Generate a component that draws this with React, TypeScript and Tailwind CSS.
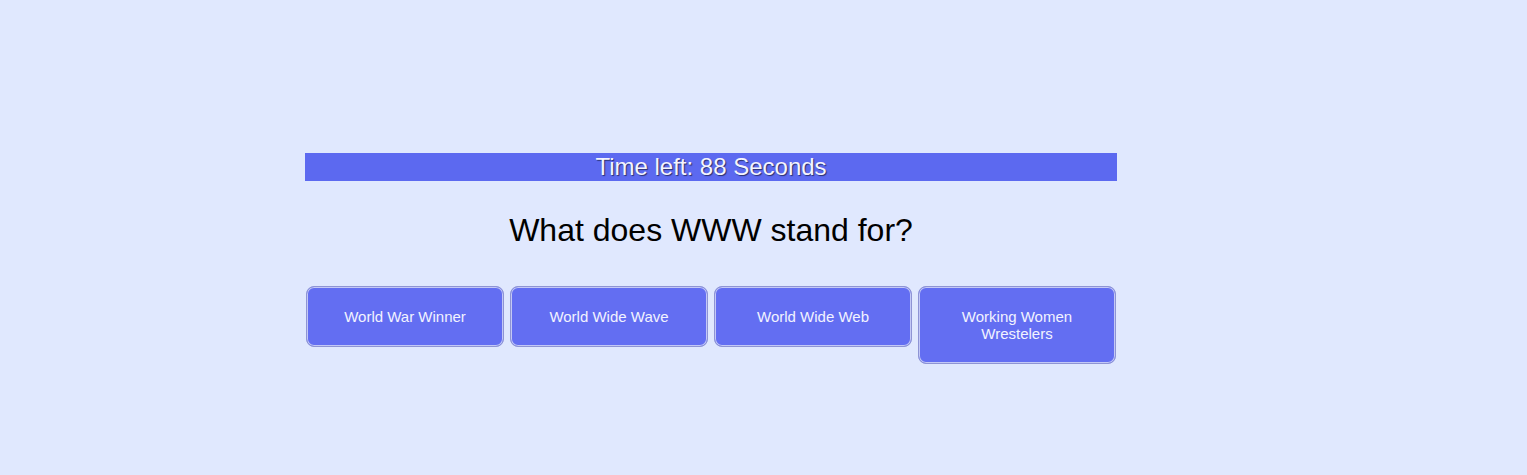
const answers = [
  "World War Winner",
  "World Wide Wave",
  "World Wide Web",
  "Working Women Wrestelers",
];

export default function App() {
  return (
    <div className="w-full h-[475px] bg-[#e0e8fe] font-['Liberation_Sans',Arial,sans-serif] pt-[153px] pl-[305px]">
      <div className="w-[812px] flex flex-col">
        {/* Timer */}
        <div className="h-[28px] bg-[#5c69f0] text-center text-[24px] leading-[28px] text-[#f4f4ff] [text-shadow:1px_1px_1px_rgba(0,0,0,0.55)]">
          Time left: 88 Seconds
        </div>

        {/* Question */}
        <h2 className="mt-[31px] text-center text-[32px] leading-[37px] text-black">
          What does WWW stand for?
        </h2>

        {/* Answers */}
        <div className="mt-[37px] px-px flex items-start gap-[6px]">
          {answers.map((a) => (
            <button
              key={a}
              className="w-[198px] py-[21px] px-6 rounded-[8px] bg-[#636ef2] border border-[#8e94d4] shadow-[inset_0_0_0_1px_#c3c8f6] text-[15px] leading-[17px] text-[#f2f3ff]"
            >
              {a}
            </button>
          ))}
        </div>
      </div>
    </div>
  );
}
